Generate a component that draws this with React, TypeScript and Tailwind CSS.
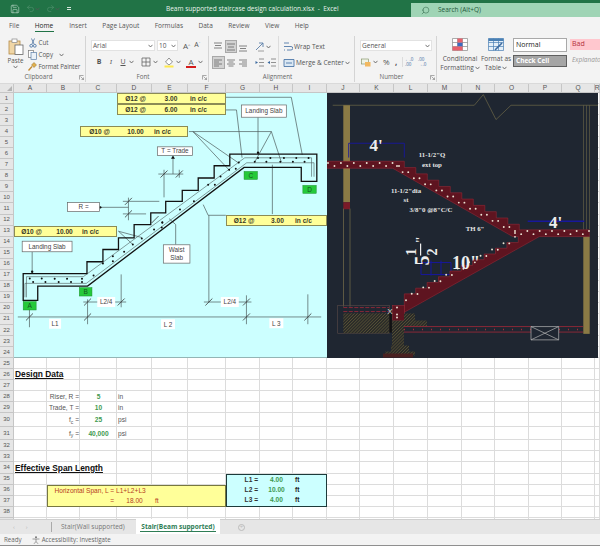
import React from "react";
import { Redo2, Save, Search, Undo2 } from "lucide-react";

const columns = ["A", "B", "C", "D", "E", "F", "G", "H", "I", "J", "K", "L", "M", "N", "O", "P", "Q", "R"];
const rowCount = 39;
const tabs = ["File", "Home", "Insert", "Page Layout", "Formulas", "Data", "Review", "View", "Help"];

const arial = "font-['Liberation_Sans',Arial,sans-serif]";
const serif = "font-['Liberation_Serif','Times_New_Roman',serif]";

const Caret = () => (
  <svg width="5" height="4" viewBox="0 0 5 4" className="shrink-0">
    <path d="M0.5 0.8 L2.5 3 L4.5 0.8" fill="none" stroke="#555" strokeWidth="0.8" />
  </svg>
);

const Launcher = () => (
  <svg width="5" height="5" viewBox="0 0 5 5" className="absolute right-[1px] bottom-[2px]">
    <path d="M0.5 4.5 V0.5 H4.5 M1.5 1.5 L4.5 4.5 M4.5 2.5 V4.5 H2.5" fill="none" stroke="#777" strokeWidth="0.6" />
  </svg>
);

// horizontal text lines, used for all of the alignment buttons
const Lines = ({ rows }: { rows: [number, number, number][] }) => (
  <svg width="10" height="10" viewBox="0 0 10 10">
    {rows.map(([y, x1, x2]) => (
      <line key={y} x1={x1} x2={x2} y1={y} y2={y} stroke="#666" strokeWidth="0.8" />
    ))}
  </svg>
);

const IconButton = ({ active, children }: { active?: boolean; children: React.ReactNode }) => (
  <div className={`flex items-center justify-center w-[12.5px] h-[13px] ${active ? "bg-[#d2d2d2] border border-[#a8a8a8]" : ""}`}>
    {children}
  </div>
);

const Group = ({ label, className, launcher, children }: { label: string; className: string; launcher?: boolean; children: React.ReactNode }) => (
  <div className={`relative flex flex-col shrink-0 border-r border-[#d4d4d4] my-[1px] ${className}`}>
    <div className="flex-1 min-h-0">{children}</div>
    <div className="h-[10px] pr-[8px] text-center leading-[9px] text-[6.2px] text-[#666]">{label}</div>
    {launcher && <Launcher />}
  </div>
);

const TitleBar = () => (
  <div className="flex items-center h-[17px] shrink-0 bg-[#217346] text-white">
    <div className="flex items-center w-[166px] pl-[10px]">
      <Save size={10} strokeWidth={1.3} className="text-[#d5e6dc]" />
      <Undo2 size={9} strokeWidth={1.3} className="ml-[6px] text-[#5f9a7a]" />
      <Caret />
      <Redo2 size={9} strokeWidth={1.3} className="ml-[6px] text-[#5f9a7a]" />
      <Caret />
      <div className="ml-[7px] w-[4px] h-[3px] border-y border-[#d5e6dc]" />
    </div>
    <span className="text-[6.5px] text-[#e8f2ec] whitespace-pre">Beam supported staircase design calculation.xlsx  -  Excel</span>
    <div className="ml-auto self-end flex items-center w-[189px] h-[14px] bg-[#9fd4b5] pl-[10px] text-[#24593c]">
      <Search size={9} strokeWidth={1.3} className="-scale-x-100" />
      <span className="ml-[8px] text-[6.5px]">Search (Alt+Q)</span>
    </div>
  </div>
);

const TabStrip = () => (
  <div className="flex items-center gap-[15.5px] h-[18px] shrink-0 pl-[9px] bg-[#f3f3f3] text-[6.5px] text-[#555]">
    {tabs.map((tab) => (
      <div key={tab} className={`relative whitespace-nowrap ${tab === "Home" ? "text-[#222] w-[19px]" : ""}`}>
        {tab}
        {tab === "Home" && <div className="absolute left-0 right-0 top-[10px] h-[1px] bg-[#217346]" />}
      </div>
    ))}
  </div>
);

const ClipboardGroup = () => (
  <Group label="Clipboard" className="w-[86px]" launcher>
    <div className="flex h-full text-[6.2px] text-[#555]">
      <div className="flex flex-col items-center w-[31px] pt-[2px]">
        <svg width="16" height="17" viewBox="0 0 16 17">
          <rect x="1" y="3" width="11" height="13" fill="#f0d6a6" stroke="#b58a45" strokeWidth="0.8" />
          <rect x="4" y="1" width="5" height="3.5" fill="#fff" stroke="#888" strokeWidth="0.7" />
          <rect x="7" y="7" width="8" height="9.5" fill="#fff" stroke="#666" strokeWidth="0.8" />
        </svg>
        <span className="mt-[1px] leading-[9px]">Paste</span>
        <Caret />
      </div>
      <div className="flex flex-col pt-[1px] -ml-[3px]">
        <div className="flex items-center h-[12.5px] pl-[1px]">
          <svg width="8" height="10" viewBox="0 0 8 10">
            <path d="M2.5 0.5 L5 6 M5.5 0.5 L3 6" stroke="#5c7fa8" strokeWidth="0.9" fill="none" />
            <circle cx="2.2" cy="7.8" r="1.4" fill="none" stroke="#3c6aa0" strokeWidth="0.8" />
            <circle cx="5.8" cy="7.8" r="1.4" fill="none" stroke="#3c6aa0" strokeWidth="0.8" />
          </svg>
          <span className="ml-[1.5px]">Cut</span>
        </div>
        <div className="flex items-center h-[12.5px]">
          <svg width="9" height="10" viewBox="0 0 9 10">
            <rect x="0.5" y="0.5" width="5" height="7" fill="#fff" stroke="#777" strokeWidth="0.7" />
            <rect x="3" y="2.5" width="5.5" height="7" fill="#eaf1f8" stroke="#5c7fa8" strokeWidth="0.7" />
          </svg>
          <span className="ml-[1.5px]">Copy</span>
          <span className="ml-[6px]"><Caret /></span>
        </div>
        <div className="flex items-center h-[12.5px]">
          <svg width="9" height="9" viewBox="0 0 9 9">
            <path d="M0.5 8.5 L4 4.5" stroke="#c58a2e" strokeWidth="1.3" />
            <path d="M3.5 3 L6 0.5 L8.5 3 L6 5.5 Z" fill="#e2b04c" stroke="#8a6a2a" strokeWidth="0.5" />
          </svg>
          <span className="ml-[1.5px] whitespace-nowrap tracking-[-0.1px]">Format Painter</span>
        </div>
      </div>
    </div>
  </Group>
);

const FontGroup = () => (
  <Group label="Font" className="w-[123px]" launcher>
    <div className="flex flex-col gap-[4px] pt-[4px] pl-[5px] text-[#555]">
      <div className="flex items-center h-[11px] gap-[2px] text-[6.5px]">
        <div className="flex items-center justify-between w-[64px] h-full bg-white border border-[#e2e2e2] px-[1px]"><span>Arial</span><Caret /></div>
        <div className="flex items-center justify-between w-[21px] h-full bg-white border border-[#e2e2e2] px-[1px]"><span>10</span><Caret /></div>
        <span className="ml-[3px] text-[8px]">A<sup className="text-[4px]">^</sup></span>
        <span className="ml-[2px] text-[7px]">A<sup className="text-[4px]">ˇ</sup></span>
      </div>
      <div className="flex items-center h-[14px] text-[7px]">
        <span className="ml-[2px] w-[12px] text-center font-bold">B</span>
        <span className="w-[12px] text-center italic font-serif">I</span>
        <span className="w-[12px] text-center underline">U</span>
        <Caret />
        <svg width="10" height="10" viewBox="0 0 10 10" className="ml-[7px]">
          <path d="M1 1 H9 V9 H1 Z M5 1 V9 M1 5 H9" fill="none" stroke="#666" strokeWidth="0.8" />
        </svg>
        <span className="ml-[2px]"><Caret /></span>
        <svg width="10" height="11" viewBox="0 0 10 11" className="ml-[6px]">
          <path d="M5 1 L8.5 5 L5 8 L1.5 5 Z" fill="#fff" stroke="#666" strokeWidth="0.7" />
          <rect x="0.5" y="8.5" width="9" height="2" fill="#ffe94d" />
        </svg>
        <span className="ml-[2px]"><Caret /></span>
        <div className="relative ml-[5px] w-[10px] h-[11px] text-center leading-[9px] text-[8px]">
          A
          <div className="absolute left-0 right-0 bottom-0 h-[2px] bg-[#d41c1c]" />
        </div>
        <span className="ml-[2px]"><Caret /></span>
      </div>
    </div>
  </Group>
);

const AlignmentGroup = () => (
  <Group label="Alignment" className="w-[146px]">
    <div className="flex h-full text-[6.5px] text-[#555]">
      <div className="flex flex-col gap-[3px] w-[70px] h-[34px] pt-[4px] pl-[3px] border-r border-[#dcdcdc]">
        <div className="flex items-center h-[13px]">
          <IconButton><Lines rows={[[1, 1, 9], [3.5, 2, 8], [6, 1, 9]]} /></IconButton>
          <IconButton active><Lines rows={[[2, 1, 9], [5, 2, 8], [8, 1, 9]]} /></IconButton>
          <IconButton><Lines rows={[[4, 1, 9], [6.5, 2, 8], [9, 1, 9]]} /></IconButton>
          <svg width="10" height="10" viewBox="0 0 10 10" className="ml-[5px]">
            <path d="M1 8 L8 1 M4 1 H8 V5" fill="none" stroke="#5c7fa8" strokeWidth="0.9" />
            <path d="M3 9 L9 9" stroke="#888" strokeWidth="0.8" />
          </svg>
          <span className="ml-[1px]"><Caret /></span>
        </div>
        <div className="flex items-center h-[13px]">
          <IconButton active><Lines rows={[[2, 1, 9], [4, 1, 6], [6, 1, 9], [8, 1, 6]]} /></IconButton>
          <IconButton><Lines rows={[[2, 1, 9], [4, 2.5, 7.5], [6, 1, 9], [8, 2.5, 7.5]]} /></IconButton>
          <IconButton><Lines rows={[[2, 1, 9], [4, 4, 9], [6, 1, 9], [8, 4, 9]]} /></IconButton>
          <div className="ml-[5px] flex gap-[2px]">
            <svg width="10" height="9" viewBox="0 0 10 9"><path d="M4 1 H9 M4 4.5 H9 M4 8 H9" stroke="#777" strokeWidth="0.8" /><path d="M0.5 3 L3 4.5 L0.5 6 Z" fill="#3c6aa0" /></svg>
            <svg width="10" height="9" viewBox="0 0 10 9"><path d="M4 1 H9 M4 4.5 H9 M4 8 H9" stroke="#777" strokeWidth="0.8" /><path d="M3 3 L0.5 4.5 L3 6 Z" fill="#3c6aa0" /></svg>
          </div>
        </div>
      </div>
      <div className="flex flex-col gap-[3px] pt-[4px] pl-[4px]">
        <div className="flex items-center h-[13px] gap-[1px] whitespace-nowrap">
          <svg width="10" height="10" viewBox="0 0 10 10"><path d="M1 1 H6 M1 4.5 H8 A1.5 1.5 0 0 1 8 8 H4 M1 8 H2" fill="none" stroke="#3c6aa0" strokeWidth="0.8" /></svg>
          <span>Wrap Text</span>
        </div>
        <div className="flex items-center h-[13px] gap-[1px] whitespace-nowrap">
          <svg width="12" height="10" viewBox="0 0 12 10"><path d="M1 1.5 H11 V8.5 H1 Z" fill="#dbe8f3" stroke="#3c6aa0" strokeWidth="0.8" /><path d="M3 5 H9" stroke="#3c6aa0" strokeWidth="0.8" /></svg>
          <span>Merge &amp; Center</span>
          <Caret />
        </div>
      </div>
    </div>
  </Group>
);

const NumberGroup = () => (
  <Group label="Number" className="w-[82px]" launcher>
    <div className="flex flex-col gap-[4px] pt-[4px] pl-[5px] text-[#555]">
      <div className="flex items-center justify-between w-[72px] h-[11px] bg-white border border-[#e2e2e2] px-[1px] text-[6.5px]">
        <span>General</span><Caret />
      </div>
      <div className="flex items-center h-[14px] pl-[1px] text-[8px]">
        <svg width="10" height="9" viewBox="0 0 10 9">
          <rect x="0.5" y="1" width="7" height="5" fill="#eef3e6" stroke="#7b8a5a" strokeWidth="0.6" />
          <rect x="4" y="4" width="5.5" height="4.5" fill="#f2b860" />
        </svg>
        <span className="ml-[2px]"><Caret /></span>
        <span className="ml-[5px] w-[9px]">%</span>
        <span className="ml-[3px] w-[6px] font-bold">,</span>
        <div className="w-[1px] h-[10px] bg-[#dcdcdc] ml-[1px]" />
        <span className="ml-[2px] w-[12px] text-[4.5px] leading-[5px] text-[#3c6aa0]">←.0<br />.00</span>
        <span className="ml-[1px] w-[12px] text-[4.5px] leading-[5px] text-[#3c6aa0]">.00<br />→.0</span>
      </div>
    </div>
  </Group>
);

const StylesGroup = () => (
  <div className="flex flex-1 min-w-0 pt-[3px] text-[6.5px] text-[#555]">
    <div className="flex flex-col items-center w-[44px] ml-[1px] leading-[8.5px]">
      <svg width="16" height="13" viewBox="0 0 16 13">
        <path d="M0.5 0.5 H15.5 V12.5 H0.5 Z M5.5 0.5 V12.5 M10.5 0.5 V12.5 M0.5 4.5 H15.5 M0.5 8.5 H15.5" fill="#fff" stroke="#8a8a8a" strokeWidth="0.7" />
        <rect x="5.5" y="4.5" width="5" height="4" fill="#3c6ac0" />
        <rect x="0.5" y="8.5" width="10" height="4" fill="#e8606c" />
        <rect x="5.5" y="0.5" width="5" height="4" fill="#e8606c" />
      </svg>
      <span className="mt-[4px]">Conditional</span>
      <span className="flex items-center gap-[1px]">Formatting <Caret /></span>
    </div>
    <div className="flex flex-col items-center w-[28px] leading-[8.5px] whitespace-nowrap">
      <svg width="16" height="13" viewBox="0 0 16 13">
        <path d="M0.5 0.5 H15.5 V12.5 H0.5 Z M5.5 0.5 V12.5 M10.5 0.5 V12.5 M0.5 4.5 H15.5 M0.5 8.5 H15.5" fill="#e4eff8" stroke="#4a80b4" strokeWidth="0.7" />
        <rect x="0.5" y="0.5" width="15" height="2.5" fill="#4a80b4" />
        <path d="M7 12 L14 5" stroke="#3c6aa0" strokeWidth="1.6" />
      </svg>
      <span className="mt-[4px]">Format as</span>
      <span className="flex items-center gap-[1px]">Table <Caret /></span>
    </div>
    <div className="flex flex-col gap-[3px] ml-[3px] w-[54px]">
      <div className="flex items-center h-[14px] pl-[2px] bg-white border border-[#a9a9a9] text-[7px] text-[#222]">Normal</div>
      <div className="flex items-center h-[12px] pl-[2px] bg-[#a5a5a5] border border-[#5f5f5f] text-[6.5px] font-bold text-white">Check Cell</div>
    </div>
    <div className="flex flex-col gap-[4px] ml-[3px] mt-[1px] flex-1 min-w-0">
      <div className="flex items-center h-[11px] pl-[2px] bg-[#ffc7ce] text-[7px] text-[#b4303c]">Bad</div>
      <div className="flex items-center h-[12px] pl-[2px] text-[6.5px] italic text-[#9a9a9a] whitespace-nowrap overflow-hidden">Explanatory</div>
    </div>
  </div>
);

const Ribbon = () => (
  <div className="flex h-[49px] shrink-0 bg-[#f3f3f3] border-b border-[#d9d9d9]">
    <ClipboardGroup />
    <FontGroup />
    <AlignmentGroup />
    <NumberGroup />
    <StylesGroup />
  </div>
);

const Dim = ({ d }: { d: string }) => <path d={d} fill="none" stroke="#4d5a5a" strokeWidth="0.7" />;

const Tick = ({ x, y }: { x: number; y: number }) => (
  <line x1={x - 3.5} y1={y + 3.5} x2={x + 3.5} y2={y - 3.5} stroke="#333" strokeWidth="0.8" />
);

const Boxed = ({ x, y, w, h, lines }: { x: number; y: number; w: number; h: number; lines: string[] }) => (
  <g>
    <rect x={x} y={y} width={w} height={h} fill="#fff" stroke="#666" strokeWidth="0.7" />
    {lines.map((line, i) => (
      <text key={line} x={x + w / 2} y={y + h / 2 + 2.3 + (i - (lines.length - 1) / 2) * 8} fontSize="6.4" fill="#444" textAnchor="middle" className={arial}>
        {line}
      </text>
    ))}
  </g>
);

const Support = ({ x, y, w, h, label }: { x: number; y: number; w: number; h: number; label: string }) => (
  <g>
    <rect x={x} y={y} width={w} height={h} fill="#25c93a" stroke="#1c8f2c" strokeWidth="0.5" />
    <text x={x + w / 2} y={y + h / 2 + 2.5} fontSize="6.5" fill="#14521f" textAnchor="middle" className={arial}>{label}</text>
  </g>
);

const SpanText = ({ x, y, label, w = 20 }: { x: number; y: number; label: string; w?: number }) => (
  <g>
    <rect x={x - w / 2} y={y - 5} width={w} height={10} fill="#fff" />
    <text x={x} y={y + 2.3} fontSize="6.4" fill="#444" textAnchor="middle" className={arial}>{label}</text>
  </g>
);

const stairDots: [number, number][] = [
  [29.3, 279], [41.3, 279], [54.3, 279.3], [66.7, 279.3], [81.7, 279.3],
  [32.7, 282.7], [45, 282.7], [58.3, 282.7], [70.7, 282.7], [81.7, 282.7],
  [93.3, 276], [102.7, 264], [112.7, 256.7], [112.7, 261.7], [124, 252.3],
  [132.7, 245], [141.7, 239], [154, 230], [161.7, 228], [162.3, 223.3],
  [162.3, 222.7], [180, 210], [194, 201.7], [208.3, 185], [215, 185],
  [220.7, 176.7], [229.3, 170], [236, 169], [239, 162.7],
  [258.3, 158.3], [270.7, 158.3], [284.3, 158.3], [296.7, 158.3], [309, 158.3],
  [255, 162], [266.7, 162], [280.7, 162], [293.3, 162], [305, 162],
];

const StairDiagram = () => (
  <svg viewBox="14 93 313 265" className="w-full h-full">
    {/* leader lines */}
    <Dim d="M226 97.3 H291.7 L302.7 155" />
    <Dim d="M226 110 H236.7 L242.3 158" />
    <Dim d="M189 131.7 H271.7 L255 162.3 M271.7 131.7 L281.7 162.3 M193 131.7 L230 171 M193 131.7 L239 163.3" />
    <Dim d="M258.3 117.3 V153" />
    <Dim d="M173 157 V174.3 M158.3 174.3 H183.3 M164 170 V197.7 M179.3 170 V178" />
    <Dim d="M100 207.7 H128.3 M128.3 198 V220.7 M122.7 201.7 H159.3 M122.7 214.3 H146" />
    <Dim d="M203.3 205 L208.3 215.7 H226 M209 215.7 V303 M272.7 165 V214.5" />
    <Dim d="M175.7 245 V225 L169 219" />
    <Dim d="M118.3 231.7 L132.7 245 M118.3 231.7 L141.7 238" />
    <Dim d="M31.7 252.3 V272" />
    <Dim d="M17.3 317.7 H321.7 M29 306 V328 M87.3 300 V325 M246.7 296 V325 M308.3 295 V325" />
    <Dim d="M83 302.7 H126 M121 275 V308 M204 302.7 H251.7" />
    <Tick x={164} y={174.3} /><Tick x={179.3} y={174.3} />
    <Tick x={128.3} y={201.7} /><Tick x={128.3} y={214.3} />
    <Tick x={155} y={220} />
    <Tick x={29} y={317.7} /><Tick x={87.3} y={317.7} /><Tick x={246.7} y={317.7} /><Tick x={308.3} y={317.7} />
    <Tick x={87.3} y={302.7} /><Tick x={121} y={302.7} /><Tick x={209} y={302.7} /><Tick x={246.7} y={302.7} />

    {/* reinforcement */}
    <path d="M26 298 V277.3 H83 L245 158 H312 V177" fill="none" stroke="#4d5a5a" strokeWidth="0.6" />
    <path d="M24.5 298 V284 H86 L247 163 H314.5 V177" fill="none" stroke="#4d5a5a" strokeWidth="0.6" />
    {stairDots.map(([x, y]) => (
      <circle key={`${x}-${y}`} cx={x} cy={y} r="1" fill="#111" />
    ))}
    <circle cx="258.3" cy="153" r="1.2" fill="#111" />
    <circle cx="31.7" cy="272.3" r="1.2" fill="#111" />
    <circle cx="100" cy="207.7" r="1.2" fill="#111" />
    <path d="M173 155.7 L171 159 H175 Z" fill="#111" />

    {/* concrete outline */}
    <path
      d="M230 154.3 H317.3 V181.7 H301.7 V167.7 H244.3 L87.3 286.7 H37.3 V301 H22.7 V274.3 H86.7 V262.3 H102.7 V250 H118.3 V238.3 H134 V225 H150.7 V213.3 H165.7 V201.7 H182.3 V190.7 H198.3 V178.3 H214.3 V166 H230 Z"
      fill="none"
      stroke="#111"
      strokeWidth="1.3"
    />

    <Boxed x={241.7} y={105} w={45} h={12.3} lines={["Landing Slab"]} />
    <Boxed x={157.3} y={147} w={35.4} h={8.7} lines={["T = Trade"]} />
    <Boxed x={67.3} y={203} w={32} h={9} lines={["R ="]} />
    <Boxed x={163.3} y={245.3} w={26.7} h={18.4} lines={["Waist", "Slab"]} />
    <Boxed x={21.7} y={241.7} w={50} h={10.6} lines={["Landing Slab"]} />
    <Support x={22.7} y={302.3} w={13} h={8.4} label="A" />
    <Support x={79} y={288.3} w={12.7} h={8.4} label="B" />
    <Support x={244.3} y={171.7} w={13.4} h={8} label="C" />
    <Support x={303.3} y={185.7} w={13.4} h={8} label="D" />
    <SpanText x={106} y={302.7} label="L2/4" w={18} />
    <SpanText x={230} y={302.7} label="L2/4" w={18} />
    <SpanText x={54.7} y={324.5} label="L1" w={12} />
    <SpanText x={168} y={325} label="L 2" w={14} />
    <SpanText x={276.7} y={324} label="L 3" w={14} />
  </svg>
);

// steps of a flight: repeats a riser and a tread, as a path fragment
const steps = (count: number, rise: number, run: number) =>
  Array.from({ length: count }, () => `v${rise} h${run}`).join(" ");

const along = (x1: number, y1: number, x2: number, y2: number, count: number, wobble: number) =>
  Array.from({ length: count }, (_, i) => {
    const t = i / (count - 1);
    return [x1 + (x2 - x1) * t, y1 + (y2 - y1) * t + (i % 2 === 0 ? -wobble : wobble)] as [number, number];
  });

const cadDots: [number, number][] = [
  ...along(327, 164, 398, 164, 12, 1.5),
  ...along(396, 167, 514, 231, 22, 1.5),
  ...along(514, 232, 588, 232, 13, 1.6),
  ...along(514, 238, 405, 298, 20, 1.7),
  ...along(396, 308, 396, 318, 3, 1),
];

const CadDrawing = () => (
  <svg viewBox="326 93 271 264" className="w-full h-full">
    <defs>
      <pattern id="hatch" width="2.2" height="2.2" patternUnits="userSpaceOnUse" patternTransform="rotate(45)">
        <rect width="2.2" height="2.2" fill="#2a2a28" />
        <line x1="0" y1="0" x2="0" y2="2.2" stroke="#77703f" strokeWidth="0.8" />
      </pattern>
    </defs>
    <path d="M331.7 104.7 H473.3 L482.3 94 L495 119 L510 104.7 H597" fill="none" stroke="#6d6748" strokeWidth="0.7" />
    <rect x="342.3" y="104.7" width="6.7" height="97" fill="#8a7a45" />
    <rect x="342.3" y="201.7" width="6.7" height="7" fill="#7a1a28" />
    <path d="M342.5 208 V306 M349 208 V306" stroke="#6d6748" strokeWidth="0.8" />
    <path d="M582.5 104.7 V229 M585.5 104.7 V229 M588.5 104.7 V229" stroke="#6d6748" strokeWidth="0.6" />
    <rect x="582.3" y="236" width="6.4" height="97.3" fill="#8a7a45" />

    <path d="M347.7 157 V142.7 H403.3 V157" fill="none" stroke="#17179c" strokeWidth="0.9" />
    <path d="M526.7 220.7 H583.3" stroke="#17179c" strokeWidth="1.4" />
    <path d="M420 262 H450 V274 H420 Z M430 260 V275 M440 260 V275" fill="none" stroke="#17179c" strokeWidth="1" />

    <path
      d={`M325 160.7 H403.3 ${steps(10, 6.3, 11.5)} V229.3 H588.3 V236 H538.3 L403.3 311.7 V299 ${Array.from({ length: 10 }, () => "v-5.7 h11.4").join(" ")} V236 H511.7 L391.7 167.7 H325 Z`}
      fill="#5e1420"
      stroke="#a32a38"
      strokeWidth="0.5"
    />
    <rect x="391.7" y="305" width="11.6" height="15" fill="#5e1420" stroke="#a32a38" strokeWidth="0.5" />
    {cadDots.map(([x, y], i) => (
      <circle key={i} cx={x} cy={y} r="0.95" fill="#ece4d4" />
    ))}

    <rect x="336.7" y="305" width="51.6" height="27.7" fill="none" stroke="#5a4a48" strokeWidth="0.6" />
    <path d="M342.3 307 H388 M342.3 311 H388" stroke="#a32a38" strokeWidth="0.8" strokeDasharray="4 1.5" />
    <rect x="342.3" y="312.7" width="46" height="20" fill="url(#hatch)" />
    <rect x="388.3" y="312" width="2.5" height="20" fill="#111" />
    <path d="M391 320 H403 V313 H414 V320 H426 V326 H403 V345 L408 345 V351 L414 351 V355 H384 V351 L390 351 V345 L391 345 Z" fill="url(#hatch)" />
    <rect x="382" y="353" width="30" height="4" fill="#4a2020" />
    <path d="M403 326 H530 M403 331.5 H530 M558 326 H582 M558 331.5 H582" stroke="#a32a38" strokeWidth="0.8" />
    <path d="M403 329 H530 M558 329 H582" stroke="#a32a38" strokeWidth="1.6" strokeDasharray="1 8" />
    <path d="M530 326 H557.7 V339.3 H530 Z M530 326 L557.7 339.3 M557.7 326 L530 339.3" fill="none" stroke="#b5b5b5" strokeWidth="0.7" />
    <text x="389" y="313" fontSize="8" fill="#d8d8d8" textAnchor="middle" className={arial}>X</text>

    <g fill="#eee" fontWeight="700" textAnchor="middle" className={serif}>
      <text x="375" y="150" fontSize="17">4'</text>
      <text x="554.5" y="227" fontSize="17">4'</text>
      <text x="465" y="268" fontSize="18">10"</text>
      <g transform="translate(421 265) rotate(-90)" textAnchor="start">
        <text x="0" y="7" fontSize="20">5</text>
        <text x="10" y="-6" fontSize="14">1</text>
        <text x="10" y="15" fontSize="14">2</text>
        <rect x="10" y="-2" width="12" height="1.2" />
        <text x="22" y="2" fontSize="13">"</text>
      </g>
      <g fontSize="6.8" fill="#e6e6e6">
        <text x="431" y="156.5">11-1/2"Q</text>
        <text x="431" y="166">ext top</text>
        <text x="405" y="192">11-1/2"dia</text>
        <text x="405" y="201">st</text>
        <text x="430" y="211.5">3/8"0 @8"C/C</text>
        <text x="474" y="230">TH 6"</text>
      </g>
    </g>
  </svg>
);

const YellowBar = ({ className, cells }: { className: string; cells: [string, string, string] }) => (
  <div className={`z-10 grid items-center bg-[#ffff99] border border-[#8b8b55] text-[6.6px] font-bold text-[#3a3a28] ${className}`}>
    <span className="text-center">{cells[0]}</span>
    <span className="text-center">{cells[1]}</span>
    <span className="pl-[1px]">{cells[2]}</span>
  </div>
);

const dataCells = [
  { col: 2, row: 26, cls: "text-[8.4px] font-bold underline text-[#111] pl-[1px]", text: "Design Data" },
  { col: 3, row: 28, cls: "justify-end pr-[1px] text-[#555]", text: "Riser, R =" },
  { col: 4, row: 28, cls: "justify-center font-bold text-[#3f9a4f]", text: "5" },
  { col: 5, row: 28, cls: "pl-[1px] text-[#555]", text: "in" },
  { col: 3, row: 29, cls: "justify-end pr-[1px] text-[#555]", text: "Trade, T =" },
  { col: 4, row: 29, cls: "justify-center font-bold text-[#3f9a4f]", text: "10" },
  { col: 5, row: 29, cls: "pl-[1px] text-[#555]", text: "in" },
  { col: 3, row: 30, cls: "justify-end pr-[1px] text-[#555]", text: <span>f<sub className="text-[5px]">c</sub> =</span> },
  { col: 4, row: 30, cls: "justify-center font-bold text-[#3f9a4f]", text: "25" },
  { col: 5, row: 30, cls: "pl-[1px] text-[#555]", text: "psi" },
  { col: 3, row: 31, cls: "justify-end pr-[1px] text-[#555]", text: <span>f<sub className="text-[5px]">y</sub> =</span> },
  { col: 4, row: 31, cls: "justify-center font-bold text-[#3f9a4f]", text: "40,000" },
  { col: 5, row: 31, cls: "pl-[1px] text-[#555]", text: "psi" },
  { col: 2, row: 34, cls: "text-[8.4px] font-bold underline text-[#111] pl-[1px]", text: "Effective Span Length" },
];

const spanRows = [
  ["L1 =", "4.00"],
  ["L2 =", "10.00"],
  ["L3 =", "4.00"],
];

const Sheet = () => (
  <div
    className={`flex-1 min-h-0 overflow-hidden bg-white text-[6.6px] ${arial} grid grid-cols-[14px_33px_33px_37px_35px_36px_38px_34px_33px_34px_33px_34px_34px_34px_33px_34px_33px_33px_5px] grid-rows-[9px_repeat(29,11.05px)_14px_13px_repeat(8,11.05px)]`}
  >
    {/* corner + column headings */}
    <div style={{ gridColumn: 1, gridRow: 1 }} className="flex items-end justify-end p-[1px] bg-[#e6e6e6] border-r border-b border-[#c6c6c6]">
      <svg width="5" height="5" viewBox="0 0 5 5"><path d="M5 0 V5 H0 Z" fill="#b4b4b4" /></svg>
    </div>
    {columns.map((col, i) => (
      <div key={col} style={{ gridColumn: i + 2, gridRow: 1 }} className="flex items-center justify-center bg-[#e6e6e6] border-r border-b border-[#c6c6c6] text-[#555]">
        {col}
      </div>
    ))}

    {/* row headings and empty cells */}
    {Array.from({ length: rowCount }, (_, r) => (
      <React.Fragment key={r}>
        <div style={{ gridColumn: 1, gridRow: r + 2 }} className="flex items-center justify-center bg-[#e6e6e6] border-r border-b border-[#c6c6c6] text-[6px] text-[#555]">
          {r < 38 ? r + 1 : ""}
        </div>
        {columns.map((col, c) => (
          <div key={col} style={{ gridColumn: c + 2, gridRow: r + 2 }} className="border-r border-b border-[#dcdcdc]" />
        ))}
      </React.Fragment>
    ))}

    {/* the two pictures over A1:R24 */}
    <div className="col-start-2 col-span-9 row-start-2 row-span-24 bg-[#ccffff] border-b border-[#93b5b5]">
      <StairDiagram />
    </div>
    <div className="col-start-11 col-span-9 row-start-2 row-span-24 w-[271px] bg-[#1f2631]">
      <CadDrawing />
    </div>

    <YellowBar className="col-start-5 col-span-3 row-start-2 grid-cols-[35px_36px_38px]" cells={["Ø12 @", "3.00", "in c/c"]} />
    <YellowBar className="col-start-5 col-span-3 row-start-3 grid-cols-[35px_36px_38px]" cells={["Ø12 @", "6.00", "in c/c"]} />
    <YellowBar className="col-start-4 col-span-3 row-start-5 grid-cols-[37px_35px_36px]" cells={["Ø10 @", "10.00", "in c/c"]} />
    <YellowBar className="col-start-8 col-span-3 row-start-13 grid-cols-[34px_33px_34px]" cells={["Ø12 @", "3.00", "in c/c"]} />
    <YellowBar className="col-start-2 col-span-3 row-start-14 grid-cols-[33px_33px_37px]" cells={["Ø10 @", "10.00", "in c/c"]} />

    {/* cells with values */}
    {dataCells.map((cell) => (
      <div
        key={`${cell.col}-${cell.row}`}
        style={{ gridColumn: cell.col, gridRow: cell.row + 1 }}
        className={`flex items-center whitespace-nowrap ${cell.cls}`}
      >
        {cell.text}
      </div>
    ))}

    <div className="col-start-3 col-span-5 row-start-37 row-span-2 flex flex-col bg-[#ffff99] border border-[#77773f] text-[#b5401f]">
      <div className="flex-1 flex items-center pl-[6.5px]">Horizontal Span, L = L1+L2+L3</div>
      <div className="flex-1 grid grid-cols-[70px_35px_36px] items-center">
        <span className="text-right pr-[4px]">=</span>
        <span className="text-center -ml-[2px]">18.00</span>
        <span className="pl-[2px]">ft</span>
      </div>
    </div>

    <div className="col-start-8 col-span-3 row-start-36 row-span-3 flex flex-col bg-[#ccffff] border-[1.5px] border-[#1d3a3a]">
      {spanRows.map(([label, value]) => (
        <div key={label} className="flex-1 grid grid-cols-[33px_33px_32px] items-center font-bold">
          <span className="text-right pr-[2px] text-[#333]">{label}</span>
          <span className="text-center text-[#3f9a4f]">{value}</span>
          <span className="pl-[2px] text-[#222]">ft</span>
        </div>
      ))}
    </div>
  </div>
);

const SheetTabs = () => (
  <div className="flex items-stretch h-[15px] shrink-0 bg-[#e6e6e6] border-t border-[#cfcfcf] text-[6.5px] text-[#777]">
    <div className="flex items-center w-[52px] pl-[13px] gap-[11px] text-[#b5b5b5] text-[6px] border-r border-[#aaa] my-[2px]">
      <span>‹</span>
      <span>›</span>
    </div>
    <div className="flex items-center w-[84px] pl-[9px] whitespace-nowrap">Stair(Wall supported)</div>
    <div className="relative flex items-center justify-center w-[84px] -mt-[1px] bg-white font-bold text-[#2e7d55] whitespace-nowrap">
      Stair(Beam supported)
      <div className="absolute left-[4px] right-[4px] bottom-[2px] h-[1px] bg-[#2e7d55]" />
    </div>
    <div className="flex items-center justify-center ml-[18px] my-auto w-[7px] h-[7px] rounded-full border border-[#bcbcbc] text-[6px] leading-none text-[#bcbcbc]">+</div>
  </div>
);

const StatusBar = () => (
  <div className="flex items-center h-[12px] shrink-0 pl-[4px] bg-[#f3f3f3] border-b border-[#8f8f8f] text-[6.2px] text-[#666]">
    <span>Ready</span>
    <svg width="8" height="8" viewBox="0 0 8 8" className="ml-[10px]">
      <circle cx="4" cy="1.3" r="1" fill="#777" />
      <path d="M0.5 3 H7.5 M4 3 V5.5 L2 7.8 M4 5.5 L6 7.8" fill="none" stroke="#777" strokeWidth="0.7" />
    </svg>
    <span className="ml-[2px]">Accessibility: Investigate</span>
  </div>
);

export default function App() {
  return (
    <div className="flex flex-col w-[600px] h-[546px] overflow-hidden bg-white font-['Open_Sans',sans-serif]">
      <TitleBar />
      <TabStrip />
      <Ribbon />
      <Sheet />
      <SheetTabs />
      <StatusBar />
    </div>
  );
}
